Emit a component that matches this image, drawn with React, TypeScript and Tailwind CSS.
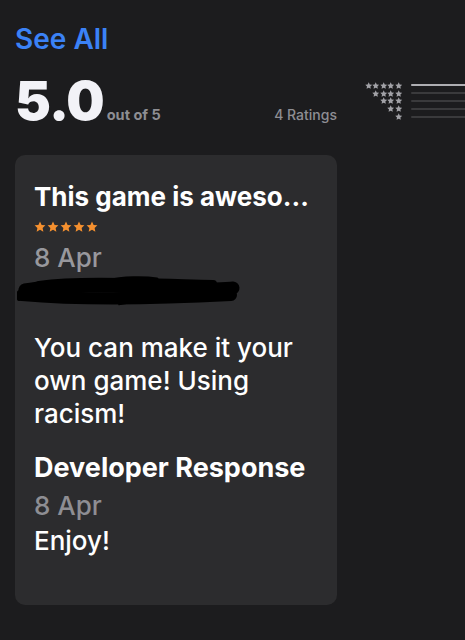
import React from 'react';

const font = "font-['Inter','Liberation_Sans',sans-serif]";

const Star = ({ className }: { className: string }) => (
  <svg viewBox="1 1 22 21" className={className} fill="currentColor">
    <path d="M12 1.8l3.1 6.6 7.2.9-5.3 5 1.4 7.1L12 17.9l-6.4 3.5 1.4-7.1-5.3-5 7.2-.9z" />
  </svg>
);

// histogram rows: 5 stars down to 1 star
const rows = [
  { stars: 5, fill: 100 },
  { stars: 4, fill: 0 },
  { stars: 3, fill: 0 },
  { stars: 2, fill: 0 },
  { stars: 1, fill: 0 },
];

const Scribble = () => (
  <svg viewBox="0 0 225 30" className="w-[225px] h-[30px] block" fill="none" stroke="#000" strokeLinecap="round">
    <path d="M8 14 C 40 8, 100 10, 150 12 S 205 13, 216 12" strokeWidth="13" />
    <path d="M5 19 C 50 23, 120 24, 214 19" strokeWidth="12" />
    <path d="M22 9 C 60 4, 110 6, 196 8" strokeWidth="8" />
    <path d="M90 5 C 106 1, 128 1, 140 3" strokeWidth="3" />
    <path d="M2 23 C 8 21, 14 20, 24 21" strokeWidth="4" />
    <path d="M102 28.5 C 120 25, 150 23, 172 25" strokeWidth="1.6" />
  </svg>
);

export default function App() {
  return (
    <div className={`min-h-[640px] w-[465px] bg-[#1c1c1e] overflow-hidden ${font}`}>
      <div className="pl-[15px] pt-[22px]">
        <div className="text-[28px] leading-[34px] font-semibold text-[#3b82f6]">See All</div>

        <div className="mt-[17px] flex items-center">
          <div className="w-[322px] h-[56px] flex items-baseline justify-between">
            <div className="flex items-baseline">
              <span className="text-[54px] leading-[56px] font-black text-[#f2f2f7] tracking-[-1px]">5.0</span>
              <span className="ml-[3px] text-[14.5px] font-bold text-[#8e8e93]">out of 5</span>
            </div>
            <span className="text-[14px] font-medium text-[#8e8e93]">4 Ratings</span>
          </div>

          <div className="ml-[28px] flex-1 flex flex-col">
            {rows.map((r) => (
              <div key={r.stars} className="h-[7.8px] flex items-center">
                <div className="w-[37px] flex justify-end text-[#a1a1a6]">
                  {Array.from({ length: r.stars }).map((_, i) => (
                    <Star key={i} className="w-[7.4px] h-[7px]" />
                  ))}
                </div>
                <div className="ml-[9px] flex-1 h-[2px] bg-[#3a3a3c] rounded-l-full">
                  <div className="h-full bg-[#aeaeb2] rounded-l-full" style={{ width: `${r.fill}%` }} />
                </div>
              </div>
            ))}
          </div>
        </div>

        <div className="mt-[26px] w-[322px] rounded-[10px] bg-[#2c2c2e] pl-[19px] pr-[16px] pt-[26px] pb-[47px]">
          <div className="text-[26px] leading-[32px] font-bold text-white whitespace-nowrap">This game is aweso...</div>
          <div className="mt-[8px] h-[11px] flex items-center gap-[1px] text-[#f5902f]">
            {Array.from({ length: 5 }).map((_, i) => (
              <Star key={i} className="w-[12px] h-[11px]" />
            ))}
          </div>
          <div className="mt-[10px] text-[26px] leading-[32px] font-medium text-[#98989d]">8 Apr</div>
          <div className="mt-[2px] -ml-[17px]">
            <Scribble />
          </div>
          <p className="mt-[25px] text-[26px] leading-[33px] font-medium text-white">
            You can make it your own game! Using racism!
          </p>
          <div className="mt-[21px] text-[27px] leading-[34px] font-bold text-white whitespace-nowrap">Developer Response</div>
          <div className="mt-[3px] text-[26px] leading-[36px] font-medium text-[#8e8e93]">8 Apr</div>
          <div className="text-[26px] leading-[34px] font-medium text-white">Enjoy!</div>
        </div>
      </div>
    </div>
  );
}
